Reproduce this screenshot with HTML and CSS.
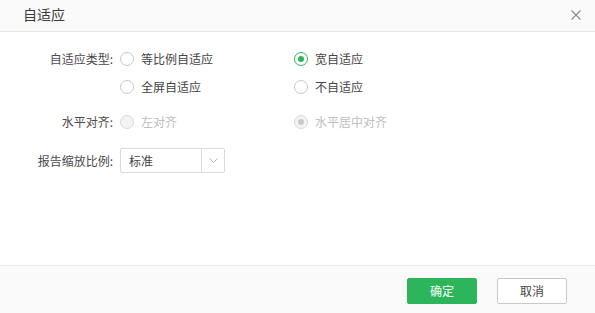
FILE: index.html
```html
<!DOCTYPE html>
<html>
<head>
<meta charset="utf-8">
<link rel="stylesheet" href="styles.css">
</head>
<body>
<div class="dialog">
  <div class="header">
    <span class="title">自适应</span>
    <svg class="close" width="10" height="10" viewBox="0 0 10 10"><path d="M0.5 0.5L9.5 9.5M9.5 0.5L0.5 9.5" stroke="#8a8a8a" stroke-width="1.1" fill="none"/></svg>
  </div>
  <div class="body">
    <div class="row">
      <div class="label">自适应类型:</div>
      <div class="grid">
        <div class="opt"><span class="radio"></span>等比例自适应</div>
        <div class="opt"><span class="radio checked"></span>宽自适应</div>
        <div class="opt"><span class="radio"></span>全屏自适应</div>
        <div class="opt"><span class="radio"></span>不自适应</div>
      </div>
    </div>
    <div class="row row-align">
      <div class="label">水平对齐:</div>
      <div class="grid disabled">
        <div class="opt"><span class="radio"></span>左对齐</div>
        <div class="opt"><span class="radio checked"></span>水平居中对齐</div>
      </div>
    </div>
    <div class="row row-scale">
      <div class="label">报告缩放比例:</div>
      <div class="select">
        <span class="value">标准</span>
        <span class="arrow"><svg width="9" height="5" viewBox="0 0 9 5"><path d="M0.5 0.5L4.5 4.5L8.5 0.5" stroke="#b5b5b5" stroke-width="1" fill="none"/></svg></span>
      </div>
    </div>
  </div>
  <div class="footer">
    <button class="btn primary">确定</button>
    <button class="btn">取消</button>
  </div>
</div>
</body>
</html>
```
FILE: styles.css
```css
html, body {
  margin: 0;
  padding: 0;
  background: #fff;
}
body {
  font-family: "Microsoft YaHei", "Noto Sans CJK SC", "Liberation Sans", sans-serif;
  font-size: 12px;
  color: #444;
}
.dialog {
  width: 595px;
  height: 313px;
  display: flex;
  flex-direction: column;
}
.header {
  height: 32px;
  box-sizing: border-box;
  border-bottom: 1px solid #e8e8e8;
  background: #fafafa;
  display: flex;
  align-items: center;
  justify-content: space-between;
  padding: 0 14px 0 23px;
}
.title {
  font-size: 14px;
  color: #3a3a3a;
  line-height: 20px;
  margin-top: -3px;
}
.close {
  margin-top: -2px;
}
.body {
  flex: 1;
  padding-top: 18px;
}
.row {
  display: flex;
  align-items: flex-start;
}
.label {
  width: 120px;
  text-align: right;
  padding-right: 7px;
  box-sizing: border-box;
  line-height: 18px;
  color: #4a4a4a;
}
.grid {
  display: grid;
  grid-template-columns: 174px 174px;
  row-gap: 10px;
}
.opt {
  display: flex;
  align-items: center;
  line-height: 18px;
  height: 18px;
  color: #444;
}
.radio {
  width: 12px;
  height: 12px;
  border: 1px solid #c8c8c8;
  border-radius: 50%;
  margin-right: 7px;
  box-sizing: content-box;
  display: inline-flex;
  align-items: center;
  justify-content: center;
  background: #fff;
}
.radio.checked {
  border-color: #2cb55b;
}
.radio.checked::after {
  content: "";
  width: 6px;
  height: 6px;
  border-radius: 50%;
  background: #2cb55b;
}
.disabled .opt {
  color: #c0c0c0;
}
.disabled .radio {
  background: #f3f3f3;
  border-color: #d8d8d8;
}
.disabled .radio.checked {
  border-color: #d8d8d8;
}
.disabled .radio.checked::after {
  background: #c8c8c8;
}
.row-align {
  margin-top: 17px;
}
.row-scale {
  margin-top: 17px;
  align-items: center;
}
.select {
  width: 105px;
  height: 25px;
  box-sizing: border-box;
  border: 1px solid #d9d9d9;
  border-radius: 2px;
  display: flex;
  align-items: stretch;
}
.value {
  flex: 1;
  padding-left: 8px;
  line-height: 23px;
  color: #444;
}
.arrow {
  width: 22px;
  border-left: 1px solid #d9d9d9;
  display: flex;
  align-items: center;
  justify-content: center;
}
.footer {
  height: 48px;
  box-sizing: border-box;
  border-top: 1px solid #e8e8e8;
  background: #fafafa;
  display: flex;
  justify-content: flex-end;
  align-items: center;
  gap: 20px;
  padding: 0 28px 0 0;
}
.btn {
  width: 70px;
  height: 26px;
  box-sizing: border-box;
  border: 1px solid #c8c8c8;
  border-radius: 2px;
  background: #fff;
  font-family: inherit;
  font-size: 12px;
  color: #444;
  padding: 0;
  margin-top: 2px;
}
.btn.primary {
  background: #2cb55b;
  border-color: #2cb55b;
  color: #fff;
}
```
